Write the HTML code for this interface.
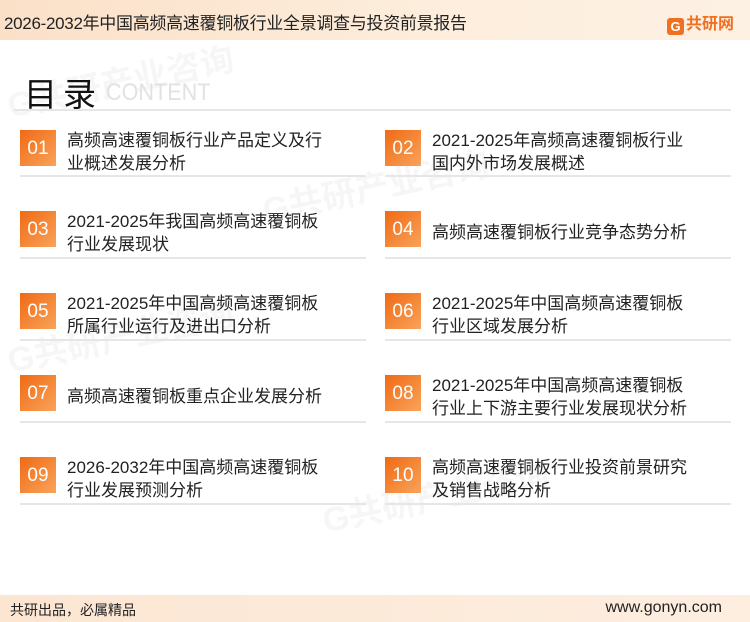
<!DOCTYPE html>
<html><head><meta charset="utf-8"><style>
*{margin:0;padding:0;box-sizing:border-box}
body{width:750px;height:622px;overflow:hidden;background:#fff;font-family:"Liberation Sans","Noto Sans CJK SC",sans-serif;position:relative;color:#222}
.hdr{position:absolute;left:0;top:0;width:750px;height:40px;background:linear-gradient(90deg,#fbe0c8,#fdeedd 60%,#fdf1e4)}
.hdr .t{position:absolute;left:4px;top:9px;font-size:17px;color:#222;letter-spacing:-0.3px}
.logo{position:absolute;left:667px;top:10px;font-size:16px;font-weight:bold;color:#f07022}
.logo b{display:inline-block;width:17px;height:17px;background:#f07022;border-radius:3px;color:#fff;font-size:13px;text-align:center;line-height:17px;vertical-align:-2px;margin-right:2px}
.mulu{position:absolute;left:24px;top:68px;font-size:33px;color:#111;letter-spacing:6px}
.ct{position:absolute;left:106px;top:79px;font-size:24px;color:#e2e2e2;transform:scaleX(0.9);transform-origin:left}
.hl{position:absolute;left:14px;top:109px;width:717px;height:2px;background:#e6e6e6}
.box{position:absolute;width:36px;height:36px;background:linear-gradient(135deg,#f06a14,#f9a35a);color:#fff;font-size:19px;text-align:center;line-height:38px}
.txt{position:absolute;font-size:17px;line-height:23px;color:#222;white-space:nowrap}
.ln{position:absolute;height:2px;background:#e6e6e6;width:346px}
.ftr{position:absolute;left:0;top:595px;width:750px;height:27px;background:linear-gradient(90deg,#fce6d2,#fdeee0)}
.ftr .a{position:absolute;left:10px;top:5px;font-size:14px;color:#222}
.ftr .b{position:absolute;right:28px;top:4px;font-size:16px;color:#222}
.wm{position:absolute;color:rgba(0,0,0,0.035);font-size:34px;font-weight:bold;transform:rotate(-12deg);white-space:nowrap}
</style></head><body>
<div class="hdr"><div class="t">2026-2032年中国高频高速覆铜板行业全景调查与投资前景报告</div><div class="logo"><b>G</b>共研网</div></div>
<div class="wm" style="left:5px;top:55px">G共研产业咨询</div>
<div class="wm" style="left:260px;top:160px">G共研产业咨询</div>
<div class="wm" style="left:5px;top:310px">G共研产业咨询</div>
<div class="wm" style="left:320px;top:470px">G共研产业咨询</div>
<div class="mulu">目录</div><div class="ct">CONTENT</div>
<div class="hl"></div>

<div class="box" style="left:20px;top:130px">01</div><div class="txt" style="left:67px;top:129px">高频高速覆铜板行业产品定义及行<br>业概述发展分析</div><div class="ln" style="left:20px;top:175px"></div>
<div class="box" style="left:385px;top:130px">02</div><div class="txt" style="left:432px;top:129px">2021-2025年高频高速覆铜板行业<br>国内外市场发展概述</div><div class="ln" style="left:385px;top:175px"></div>

<div class="box" style="left:20px;top:211px">03</div><div class="txt" style="left:67px;top:210px">2021-2025年我国高频高速覆铜板<br>行业发展现状</div><div class="ln" style="left:20px;top:257px"></div>
<div class="box" style="left:385px;top:211px">04</div><div class="txt" style="left:432px;top:221px">高频高速覆铜板行业竞争态势分析</div><div class="ln" style="left:385px;top:257px"></div>

<div class="box" style="left:20px;top:293px">05</div><div class="txt" style="left:67px;top:292px">2021-2025年中国高频高速覆铜板<br>所属行业运行及进出口分析</div><div class="ln" style="left:20px;top:339px"></div>
<div class="box" style="left:385px;top:293px">06</div><div class="txt" style="left:432px;top:292px">2021-2025年中国高频高速覆铜板<br>行业区域发展分析</div><div class="ln" style="left:385px;top:339px"></div>

<div class="box" style="left:20px;top:375px">07</div><div class="txt" style="left:67px;top:385px">高频高速覆铜板重点企业发展分析</div><div class="ln" style="left:20px;top:421px"></div>
<div class="box" style="left:385px;top:375px">08</div><div class="txt" style="left:432px;top:374px">2021-2025年中国高频高速覆铜板<br>行业上下游主要行业发展现状分析</div><div class="ln" style="left:385px;top:421px"></div>

<div class="box" style="left:20px;top:457px">09</div><div class="txt" style="left:67px;top:456px">2026-2032年中国高频高速覆铜板<br>行业发展预测分析</div><div class="ln" style="left:20px;top:503px"></div>
<div class="box" style="left:385px;top:457px">10</div><div class="txt" style="left:432px;top:456px">高频高速覆铜板行业投资前景研究<br>及销售战略分析</div><div class="ln" style="left:385px;top:503px"></div>

<div class="ftr"><div class="a">共研出品，必属精品</div><div class="b">www.gonyn.com</div></div>
</body></html>
